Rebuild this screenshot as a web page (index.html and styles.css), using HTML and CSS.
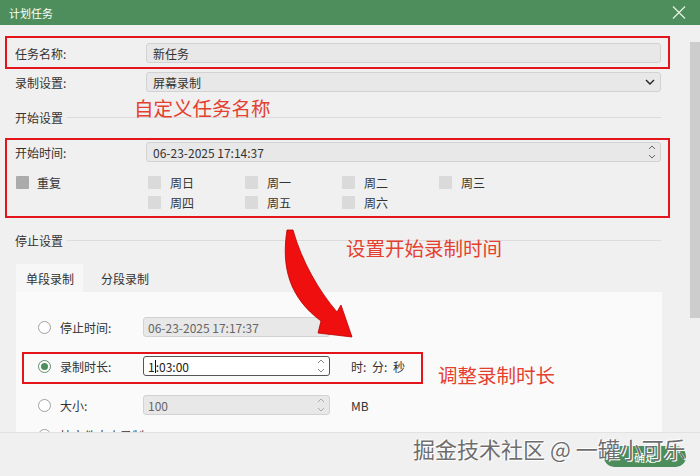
FILE: index.html
```html
<!DOCTYPE html>
<html lang="zh-CN">
<head>
    <meta charset="UTF-8">
    <title>计划任务</title>
    <link rel="stylesheet" href="styles.css">
</head>
<body>
<div class="dialog">
    <div class="titlebar">
        <span>计划任务</span>
        <svg class="close" width="14" height="13" viewBox="0 0 14 13"><path d="M1 0.5 L13 12.5 M13 0.5 L1 12.5" stroke="#e6f3e6" stroke-width="1.2" fill="none"/></svg>
    </div>

    <div class="main">
        <div class="form">
            <div class="hl hl-name">
                <div class="row">
                    <span class="label">任务名称:</span>
                    <div class="field">新任务</div>
                </div>
            </div>

            <div class="row row-mode">
                <span class="label">录制设置:</span>
                <div class="field">屏幕录制
                    <svg class="chev" width="10" height="6" viewBox="0 0 10 6"><path d="M1 1 L5 5 L9 1" stroke="#222" stroke-width="1.4" fill="none"/></svg>
                </div>
            </div>

            <div class="section section-start"><span>开始设置</span><i class="rule"></i></div>

            <div class="hl hl-start">
                <div class="row">
                    <span class="label">开始时间:</span>
                    <div class="field">06-23-2025 17:14:37
                        <svg class="spin" width="8" height="14" viewBox="0 0 8 14"><path d="M1 4 L4 1 L7 4 M1 10 L4 13 L7 10" stroke="#666" stroke-width="1" fill="none"/></svg>
                    </div>
                </div>
                <div class="repeat">
                    <label class="check check-repeat"><i class="box box-dark"></i>重复</label>
                    <div class="days">
                        <label class="check"><i class="box"></i>周日</label>
                        <label class="check"><i class="box"></i>周一</label>
                        <label class="check"><i class="box"></i>周二</label>
                        <label class="check"><i class="box"></i>周三</label>
                        <label class="check"><i class="box"></i>周四</label>
                        <label class="check"><i class="box"></i>周五</label>
                        <label class="check"><i class="box"></i>周六</label>
                    </div>
                </div>
            </div>

            <div class="section section-stop"><span>停止设置</span><i class="rule"></i></div>

            <div class="tabs">
                <span class="tab active">单段录制</span>
                <span class="tab">分段录制</span>
            </div>

            <div class="panel">
                <div class="opt opt-first">
                    <i class="radio"></i>
                    <span class="opt-label">停止时间:</span>
                    <div class="field small">06-23-2025 17:17:37</div>
                </div>

                <div class="hl hl-dur">
                    <div class="opt">
                        <i class="radio checked"></i>
                        <span class="opt-label">录制时长:</span>
                        <div class="field small active">1<i class="caret"></i>:03:00
                            <svg class="spin" width="8" height="14" viewBox="0 0 8 14"><path d="M1 4 L4 1 L7 4 M1 10 L4 13 L7 10" stroke="#888" stroke-width="1" fill="none"/></svg>
                        </div>
                        <span class="unit">时: 分: 秒</span>
                    </div>
                </div>

                <div class="opt opt-size">
                    <i class="radio"></i>
                    <span class="opt-label">大小:</span>
                    <div class="field small">100
                        <svg class="spin" width="8" height="14" viewBox="0 0 8 14"><path d="M1 4 L4 1 L7 4 M1 10 L4 13 L7 10" stroke="#aaa" stroke-width="1" fill="none"/></svg>
                    </div>
                    <span class="unit">MB</span>
                </div>

                <div class="opt opt-last">
                    <i class="radio"></i>
                    <span class="opt-label">按文件大小录制</span>
                </div>
            </div>
        </div>
        <div class="scroll"><div class="thumb"></div></div>
    </div>

    <div class="footer">
        <button class="ok">确定</button>
    </div>

    <!-- annotations drawn over the dialog -->
    <span class="note note-name">自定义任务名称</span>
    <span class="note note-start">设置开始录制时间</span>
    <span class="note note-dur">调整录制时长</span>
    <svg class="arrow" width="700" height="476" viewBox="0 0 700 476">
        <path d="M287 230 C281 268 290 298 321 321 L318 333 L352 337 L341 305 L337 312 C319 291 302 262 293 230 Z" fill="#ef0f0f" stroke="#b80000" stroke-width="0.8"/>
    </svg>
    <span class="watermark">掘金技术社区 @ 一罐小可乐</span>
</div>
</body>
</html>
```

FILE: styles.css
```css
body { margin: 0; width: 700px; height: 476px; overflow: hidden; background: #f0f0f0; color: #333; font-family: "Noto Sans CJK SC", "Noto Sans", sans-serif; font-size: 12px; }
.dialog { position: relative; height: 476px; display: flex; flex-direction: column; }

.titlebar { height: 25px; flex: none; background: #4e8e5c; color: #fff; font-size: 11px; display: flex; align-items: center; justify-content: space-between; padding: 0 14px 0 9px; }
.close { display: block; }

.main { height: 407px; display: flex; }
.form { flex: 1; display: flex; flex-direction: column; padding: 11px 29px 0 15px; }
.scroll { width: 10px; }
.thumb { margin-top: 17px; height: 276px; background: #cdcdcd; }

.hl { border: 2px solid #e3141a; margin: 0 -9px 0 -10px; padding: 5px 7px 4px 8px; }
.row { display: flex; align-items: center; height: 20px; }
.label { width: 131px; flex: none; }
.field { position: relative; flex: 1; height: 20px; box-sizing: border-box; border: 1px solid #d2d2d2; border-radius: 3px; background: #e8e8e8; padding-left: 6px; display: flex; align-items: center; }
.chev { position: absolute; right: 5px; top: 6px; }
.spin { position: absolute; right: 4px; top: 2px; }

.row-mode { margin-top: 3px; }

.section { display: flex; align-items: center; height: 16px; gap: 4px; }
.rule { flex: 1; border-top: 1px solid #dcdcdc; }
.section-start { margin-top: 17px; }
.section-stop { margin-top: 14px; }

.hl-start { margin-top: 13px; padding-top: 2px; padding-bottom: 4px; }
.repeat { display: flex; margin-top: 10px; }
.check { display: flex; align-items: center; height: 20px; gap: 9px; }
.check-repeat { width: 132px; gap: 8px; align-self: flex-start; }
.box { width: 13px; height: 13px; margin-left: 1px; background: #dadada; border-radius: 1px; }
.box-dark { background: #ababab; }
.days { display: grid; grid-template-columns: repeat(4, 97px); grid-auto-rows: 20px; }

.tabs { display: flex; margin-top: 16px; height: 28px; }
.tab { display: flex; align-items: center; padding: 0 9px 0 10px; margin-left: 1px; }
.tab + .tab { margin-left: 8px; }
.tab.active { background: #f7f7f7; }

.panel { flex: 1; overflow: hidden; background: #fafafa; margin: 0 -1px 0 1px; }
.opt { display: flex; align-items: center; height: 20px; padding-left: 22px; }
.opt-first { margin-top: 25px; }
.opt-size { margin-top: 11px; }
.opt-last { margin-top: 10px; }
.radio { width: 13px; height: 13px; box-sizing: border-box; border: 1px solid #a0a0a0; border-radius: 50%; background: #fff; flex: none; display: flex; align-items: center; justify-content: center; }
.radio.checked { border-color: #5f8f6a; }
.radio.checked::after { content: ""; width: 7px; height: 7px; border-radius: 50%; background: #4e8e5c; }
.opt-label { width: 83px; margin-left: 9px; flex: none; white-space: nowrap; }
.field.small { flex: none; width: 187px; padding-left: 4px; color: #666; }
.field.active { background: #fff; border-color: #555; color: #222; }
.caret { display: inline-block; width: 1px; height: 13px; background: #111; }
.unit { margin-left: 21px; word-spacing: 3px; }

.hl-dur { margin: 15px 0 0 6px; width: 401px; box-sizing: border-box; padding: 2px 0 6px 14px; }
.hl-dur .opt { padding-left: 0; }

.footer { flex: 1; border-top: 1px solid #e2e2e2; display: flex; justify-content: flex-end; align-items: flex-start; padding-right: 14px; }
.ok { margin-top: 13px; width: 82px; height: 21px; border: none; border-radius: 10px; background: #4b8d5b; color: #fff; font-family: inherit; font-size: 11px; }

.note { position: absolute; color: #e5402f; font-size: 19.5px; line-height: 20px; }
.note-name { left: 134px; top: 98px; }
.note-start { left: 346px; top: 238px; }
.note-dur { left: 438px; top: 365px; }
.arrow { position: absolute; left: 0; top: 0; pointer-events: none; }
.watermark { position: absolute; left: 413px; top: 434px; font-size: 22px; line-height: 28px; color: #6e6e6e; text-shadow: 1px 1px 0 #fff, -1px -1px 0 #fff; white-space: nowrap; }
```
